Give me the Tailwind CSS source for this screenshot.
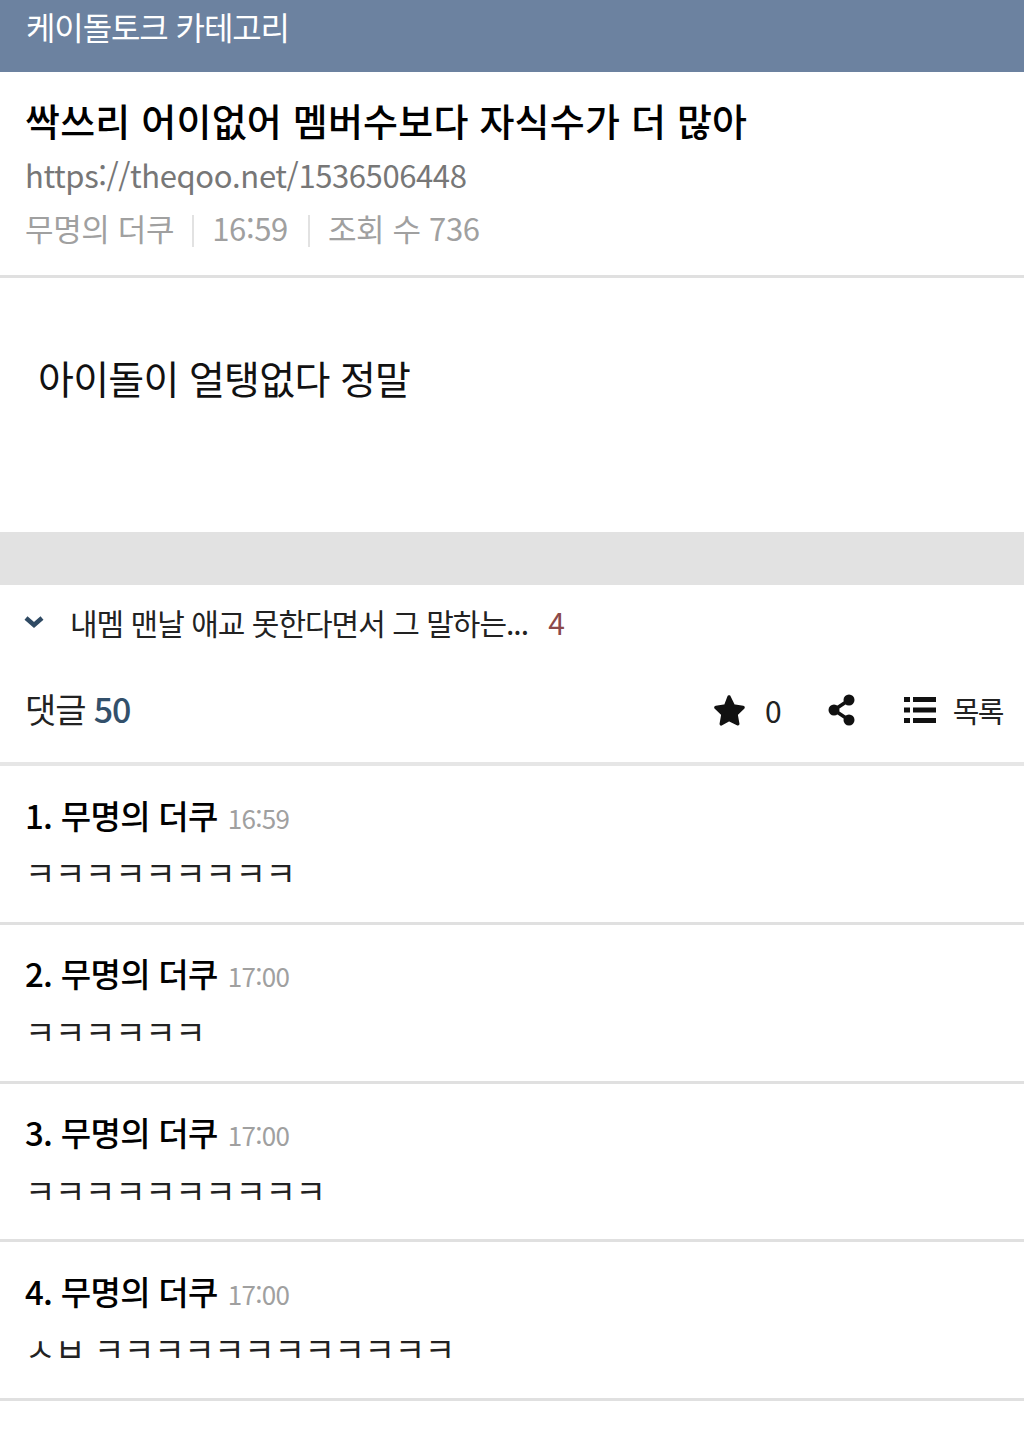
<!DOCTYPE html>
<html lang="ko">

<head>
    <meta charset="UTF-8" />
    <title>케이돌토크 카테고리</title>
    <script src="https://cdn.jsdelivr.net/npm/@tailwindcss/browser@4"></script>
</head>

<body class="bg-white font-['Noto_Sans_CJK_KR','Noto_Sans',sans-serif] overflow-hidden">
    <div class="w-[1024px] h-[1436px]">
        <!-- Header -->
        <header class="h-[72px] bg-[#6c82a0] pl-[26px] pt-[4px] pb-[8px]">
            <h1 class="text-[32px] leading-[44px] tracking-[-1.1px] text-white">케이돌토크 카테고리</h1>
        </header>

        <!-- Post title -->
        <section class="h-[206px] border-b-[3px] border-[#e0e0e0] pl-[25px] pt-[22px]">
            <h2 class="text-[38px] leading-[52px] font-medium tracking-[0.2px] text-black">싹쓰리 어이없어 멤버수보다 자식수가 더 많아</h2>
            <p class="text-[31px] leading-[44px] mt-[7px] tracking-[-0.4px] text-[#777]">https://theqoo.net/1536506448</p>
            <div class="flex items-center mt-[9px] text-[31px] leading-[44px] tracking-[-0.35px] text-[#a0a0a0]">
                <span>무명의 더쿠</span>
                <span class="w-[2px] h-[32px] mt-[6px] bg-[#e2e2e2] ml-[18px] mr-[18px]"></span>
                <span>16:59</span>
                <span class="w-[2px] h-[32px] mt-[6px] bg-[#e2e2e2] ml-[20px] mr-[18px]"></span>
                <span>조회 수 736</span>
            </div>
        </section>

        <!-- Post body -->
        <section class="h-[254px] pl-[38px] pt-[72px]">
            <p class="text-[39px] leading-[54px] tracking-[-0.7px] text-[#111]">아이돌이 얼탱없다 정말</p>
        </section>

        <div class="h-[53px] bg-[#e2e2e2]"></div>

        <!-- Next post -->
        <div class="h-[78px] flex items-center pl-[24px] pb-[4px]">
            <svg class="w-[20px] h-[14px] mr-[26px]" viewBox="0 0 20 14" fill="none" stroke="#2f4a63" stroke-width="4.5">
                <path d="M2 3l8 7 8-7" />
            </svg>
            <span class="text-[30px] leading-[40px] tracking-[-1px] text-[#222]">내멤 맨날 애교 못한다면서 그 말하는...</span>
            <span class="ml-[20px] text-[30px] leading-[40px] text-[#8c4a4a]">4</span>
        </div>

        <!-- Comment toolbar -->
        <div class="h-[103px] flex items-center justify-between pl-[25px] pr-[21px] pb-[7px] border-b-[4px] border-[#e6e6e6]">
            <div class="text-[34px] leading-[46px] tracking-[-1.1px] text-[#222]">댓글 <span class="font-medium text-[#33506b]">50</span></div>
            <div class="flex items-center mt-[2px]">
                <svg class="w-[34px] h-[32px]" viewBox="0 0 34 32" fill="#111">
                    <path d="M17 3l4.4 9 9.6 1.4-7 6.8 1.7 9.6L17 25.4 9.3 29.8 11 20.2l-7-6.8 9.6-1.4z" stroke="#111" stroke-width="3.5" stroke-linejoin="round" />
                </svg>
                <span class="ml-[19px] text-[30px] leading-[40px] text-[#222]">0</span>
                <svg class="ml-[46px] w-[28px] h-[32px]" viewBox="0 0 28 32" fill="#111">
                    <circle cx="21" cy="6" r="5.5" />
                    <circle cx="6" cy="16" r="5.5" />
                    <circle cx="21" cy="26" r="5.5" />
                    <path d="M6 16L21 6M6 16l15 10" stroke="#111" stroke-width="3.5" />
                </svg>
                <svg class="ml-[48px] w-[32px] h-[28px]" viewBox="0 0 32 28" fill="#111">
                    <rect x="0" y="1" width="6" height="5" />
                    <rect x="9" y="1" width="23" height="5" />
                    <rect x="0" y="11.5" width="6" height="5" />
                    <rect x="9" y="11.5" width="23" height="5" />
                    <rect x="0" y="22" width="6" height="5" />
                    <rect x="9" y="22" width="23" height="5" />
                </svg>
                <span class="ml-[17px] text-[29px] leading-[40px] tracking-[-1.5px] text-[#222]">목록</span>
            </div>
        </div>

        <!-- Comments -->
        <ul>
            <li class="h-[159px] border-b-[3px] border-[#e0e0e0] pl-[25px] pt-[26px]">
                <div class="flex items-baseline text-[33px] leading-[46px] tracking-[-0.7px] font-medium text-black">
                    <span>1. 무명의 더쿠</span>
                    <span class="ml-[10px] text-[26px] font-normal text-[#a0a0a0]">16:59</span>
                </div>
                <p class="mt-[11px] text-[33px] leading-[40px] tracking-[-0.3px] text-[#222]">ㅋㅋㅋㅋㅋㅋㅋㅋㅋ</p>
            </li>
            <li class="h-[159px] border-b-[3px] border-[#e0e0e0] pl-[25px] pt-[25px]">
                <div class="flex items-baseline text-[33px] leading-[46px] tracking-[-0.7px] font-medium text-black">
                    <span>2. 무명의 더쿠</span>
                    <span class="ml-[10px] text-[26px] font-normal text-[#a0a0a0]">17:00</span>
                </div>
                <p class="mt-[12px] text-[33px] leading-[40px] tracking-[-0.3px] text-[#222]">ㅋㅋㅋㅋㅋㅋ</p>
            </li>
            <li class="h-[158px] border-b-[3px] border-[#e0e0e0] pl-[25px] pt-[25px]">
                <div class="flex items-baseline text-[33px] leading-[46px] tracking-[-0.7px] font-medium text-black">
                    <span>3. 무명의 더쿠</span>
                    <span class="ml-[10px] text-[26px] font-normal text-[#a0a0a0]">17:00</span>
                </div>
                <p class="mt-[12px] text-[33px] leading-[40px] tracking-[-0.3px] text-[#222]">ㅋㅋㅋㅋㅋㅋㅋㅋㅋㅋ</p>
            </li>
            <li class="h-[159px] border-b-[3px] border-[#e0e0e0] pl-[25px] pt-[26px]">
                <div class="flex items-baseline text-[33px] leading-[46px] tracking-[-0.7px] font-medium text-black">
                    <span>4. 무명의 더쿠</span>
                    <span class="ml-[10px] text-[26px] font-normal text-[#a0a0a0]">17:00</span>
                </div>
                <p class="mt-[11px] text-[33px] leading-[40px] tracking-[-0.3px] text-[#222]">ㅅㅂ ㅋㅋㅋㅋㅋㅋㅋㅋㅋㅋㅋㅋ</p>
            </li>
        </ul>
    </div>
</body>

</html>
